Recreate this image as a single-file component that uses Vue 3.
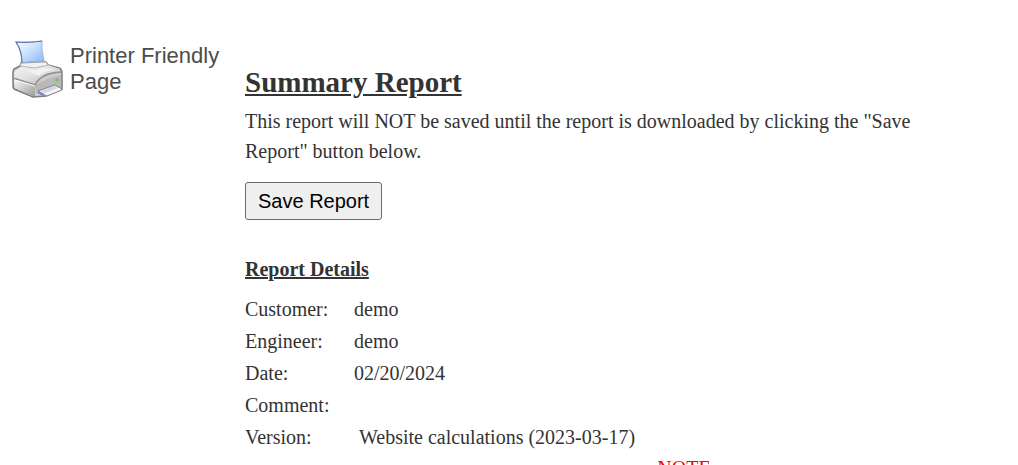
<script setup>
const details = [
  { label: 'Customer:', value: 'demo' },
  { label: 'Engineer:', value: 'demo' },
  { label: 'Date:', value: '02/20/2024' },
  { label: 'Comment:', value: '' },
  { label: 'Version:', value: '\u00a0Website calculations (2023-03-17)' },
]
</script>

<template>
  <div class="page">
    <aside>
      <a class="print" href="#print">
        <svg class="printer" viewBox="0 0 55 62" aria-hidden="true">
          <defs>
            <linearGradient id="sheet" x1="0" y1="0" x2="1" y2="1">
              <stop offset="0" stop-color="#fafdff" />
              <stop offset="0.45" stop-color="#cbe2fc" />
              <stop offset="1" stop-color="#84b8fa" />
            </linearGradient>
            <linearGradient id="lid" x1="0" y1="0" x2="0.9" y2="1">
              <stop offset="0" stop-color="#f4f4f4" />
              <stop offset="0.5" stop-color="#e2e2e2" />
              <stop offset="1" stop-color="#b4b4b4" />
            </linearGradient>
            <linearGradient id="front" x1="0" y1="0" x2="1" y2="1">
              <stop offset="0" stop-color="#fafafa" />
              <stop offset="1" stop-color="#9c9c9c" />
            </linearGradient>
          </defs>
          <path d="M4 31 L10 28 L11 25 L36 24 L38 27 L49 30 Q52 31 52 35 V51 L36 58 L23 59 L4 51 Q3 50 3 47 V35 Q3 32 4 31Z" fill="#cccccc" stroke="#7c7c7c" stroke-width="1.5" />
          <path d="M4 41 L25 47 V58 L22 58 L5 50Z" fill="url(#front)" />
          <path d="M25 47 L38 41 L51 37 V49 L44 48 L26 55Z" fill="#b8b8b8" />
          <path d="M4 34 L12 28 L38 27 L50 31 L49 34 Q32 34 25 46 L4 40Z" fill="url(#lid)" />
          <path d="M18 33 L34 30 L46 32 Q34 33 29 38Z" fill="#f5f5f5" opacity="0.8" />
          <path d="M10 28 L11 25 L36 24 L38 27 L25 30Z" fill="#f1f1f1" stroke="#a6a6a6" stroke-width="0.8" />
          <path d="M6 4 Q19 5 32 3 Q31 11 34 23 Q23 23 12 25 Q12 13 6 4Z" fill="url(#sheet)" stroke="#8ea0d2" stroke-width="0.8" />
          <path d="M12 25 Q12 13 6 4 Q19 5 32 3" fill="none" stroke="#6872ad" stroke-width="1.2" />
          <path d="M3 40 L25 47 Q31 35 51 34" fill="none" stroke="#909090" stroke-width="1.6" />
          <path d="M5 42 L25 48" fill="none" stroke="#ffffff" stroke-width="1" />
          <path d="M28 53 L45 47 L52 51 V52 L37 58 L29 55Z" fill="#f6f6f6" stroke="#808080" stroke-width="1" />
          <path d="M30 53 L44 48 L48 50 L35 55Z" fill="#d5d8df" />
          <path d="M28 54 L34 57" stroke="#7480c4" stroke-width="2" />
          <circle cx="47" cy="42" r="1.8" fill="#6bd04b" />
        </svg>
        <span>Printer Friendly Page</span>
      </a>
    </aside>
    <main>
      <h1>Summary Report</h1>
      <p class="intro">This report will NOT be saved until the report is downloaded by clicking the "Save Report" button below.</p>
      <button type="button">Save Report</button>
      <h2>Report Details</h2>
      <table>
        <tbody>
          <tr v-for="row in details" :key="row.label">
            <th scope="row">{{ row.label }}</th>
            <td>{{ row.value }}</td>
          </tr>
        </tbody>
      </table>
      <p class="note">NOTE</p>
    </main>
  </div>
</template>

<style>
html {
  background: #ffffff;
  overflow: hidden;
}
</style>

<style scoped>
.page {
  display: grid;
  grid-template-columns: 235px minmax(0, 1fr);
  column-gap: 10px;
  color: #333333;
  font-family: "Liberation Serif", "Times New Roman", serif;
  font-size: 20px;
  line-height: 30px;
}
aside {
  padding: 38px 0 0 10px;
}
.print {
  display: flex;
  gap: 5px;
  color: #4c4c4c;
  font-family: "Liberation Sans", Arial, sans-serif;
  font-size: 22px;
  line-height: 26px;
  text-decoration: none;
}
.print span {
  padding-top: 5px;
}
.printer {
  flex: none;
  width: 55px;
  height: 62px;
}
main {
  padding: 64px 68px 0 0;
}
h1,
h2,
p {
  margin: 0;
}
h1 {
  font-size: 29px;
  line-height: 36px;
  text-decoration: underline;
  margin-bottom: 6px;
}
button {
  display: block;
  margin: 16px 0 34px;
  padding: 5px 12px;
  border: 1px solid #6b6b6b;
  border-radius: 3px;
  background: #efefef;
  color: #000000;
  font-family: "Liberation Sans", Arial, sans-serif;
  font-size: 20px;
  line-height: 26px;
}
h2 {
  font-size: 20px;
  line-height: 30px;
  text-decoration: underline;
  margin-bottom: 9px;
}
table {
  border-collapse: collapse;
}
th,
td {
  height: 32px;
  padding: 0;
  font-weight: 400;
  text-align: left;
}
th {
  width: 109px;
}
.note {
  padding-left: 173px;
  color: #ff0000;
  text-align: center;
}
</style>
